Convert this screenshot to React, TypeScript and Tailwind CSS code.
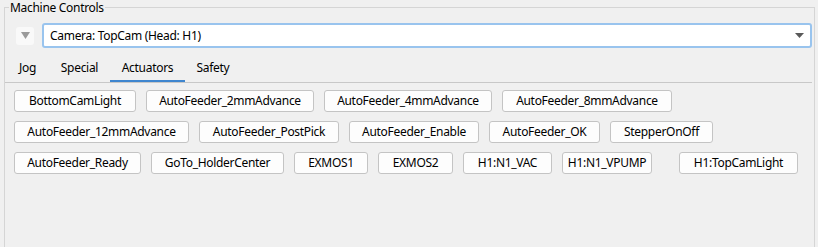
import { FC } from 'react';

type Btn = { label: string; w: number; gap?: number };

const rows: Btn[][] = [
  [
    { label: 'BottomCamLight', w: 122 },
    { label: 'AutoFeeder_2mmAdvance', w: 168 },
    { label: 'AutoFeeder_4mmAdvance', w: 168 },
    { label: 'AutoFeeder_8mmAdvance', w: 170 },
  ],
  [
    { label: 'AutoFeeder_12mmAdvance', w: 175 },
    { label: 'AutoFeeder_PostPick', w: 140 },
    { label: 'AutoFeeder_Enable', w: 130 },
    { label: 'AutoFeeder_OK', w: 111 },
    { label: 'StepperOnOff', w: 103 },
  ],
  [
    { label: 'AutoFeeder_Ready', w: 127 },
    { label: 'GoTo_HolderCenter', w: 133 },
    { label: 'EXMOS1', w: 74 },
    { label: 'EXMOS2', w: 75 },
    { label: 'H1:N1_VAC', w: 89 },
    { label: 'H1:N1_VPUMP', w: 90 },
    { label: 'H1:TopCamLight', w: 119, gap: 17 },
  ],
];

const tabs = [
  { label: 'Jog', w: 43 },
  { label: 'Special', w: 61 },
  { label: 'Actuators', w: 75 },
  { label: 'Safety', w: 56 },
];

const ActuatorButton: FC<{ btn: Btn }> = ({ btn }) => (
  <button
    className="flex h-[22px] shrink-0 items-center justify-center rounded-[3px] border border-[#c4c4c4] bg-[#fdfdfd] text-[12px] text-black"
    style={{ width: btn.w, marginLeft: btn.gap }}
  >
    {btn.label}
  </button>
);

export default function App() {
  return (
    <div className="h-[247px] w-[818px] overflow-hidden bg-[#f0f0f0] font-['Noto_Sans',sans-serif] text-[12px] tracking-[-0.3px] text-black">
      <fieldset className="mx-[4px] h-[260px] w-[811px] border border-[#d5d5d5] pt-[8px]">
        <legend className="ml-[4px] px-[1px] leading-[15px] text-[12px]">Machine Controls</legend>

        {/* camera selector */}
        <div className="flex items-center pl-[11px] pr-[2px]">
          <div className="flex h-[18px] w-[18px] items-center justify-center rounded-[3px] bg-[#f9f9f9]">
            <svg width="9" height="7" viewBox="0 0 9 7">
              <path d="M0 0 L9 0 L4.5 7 Z" fill="#9a9a9a" />
            </svg>
          </div>
          <div className="ml-[8px] flex h-[25px] flex-1 items-center justify-between rounded-[3px] border-2 border-[#99c4ee] bg-white pl-[6px] pr-[6px]">
            <span>Camera: TopCam (Head: H1)</span>
            <svg width="9" height="5" viewBox="0 0 9 5">
              <path d="M0 0 L9 0 L4.5 5 Z" fill="#5a5a5a" />
            </svg>
          </div>
        </div>

        {/* tabs */}
        <div className="mt-[5px] mr-[2px] flex h-[30px] border-b border-[#c8c8c8] pl-[1px]">
          {tabs.map((t) => (
            <div
              key={t.label}
              className={
                'flex items-center justify-center border-b-[2px] pt-[3px] ' +
                (t.label === 'Actuators' ? 'border-[#3f86cf]' : 'border-transparent')
              }
              style={{ width: t.w }}
            >
              {t.label}
            </div>
          ))}
        </div>

        {/* actuator buttons */}
        <div className="flex flex-col gap-[9px] pl-[9px] pt-[7px]">
          {rows.map((row, i) => (
            <div key={i} className="flex gap-[10px]">
              {row.map((b) => (
                <ActuatorButton key={b.label} btn={b} />
              ))}
            </div>
          ))}
        </div>
      </fieldset>
    </div>
  );
}
